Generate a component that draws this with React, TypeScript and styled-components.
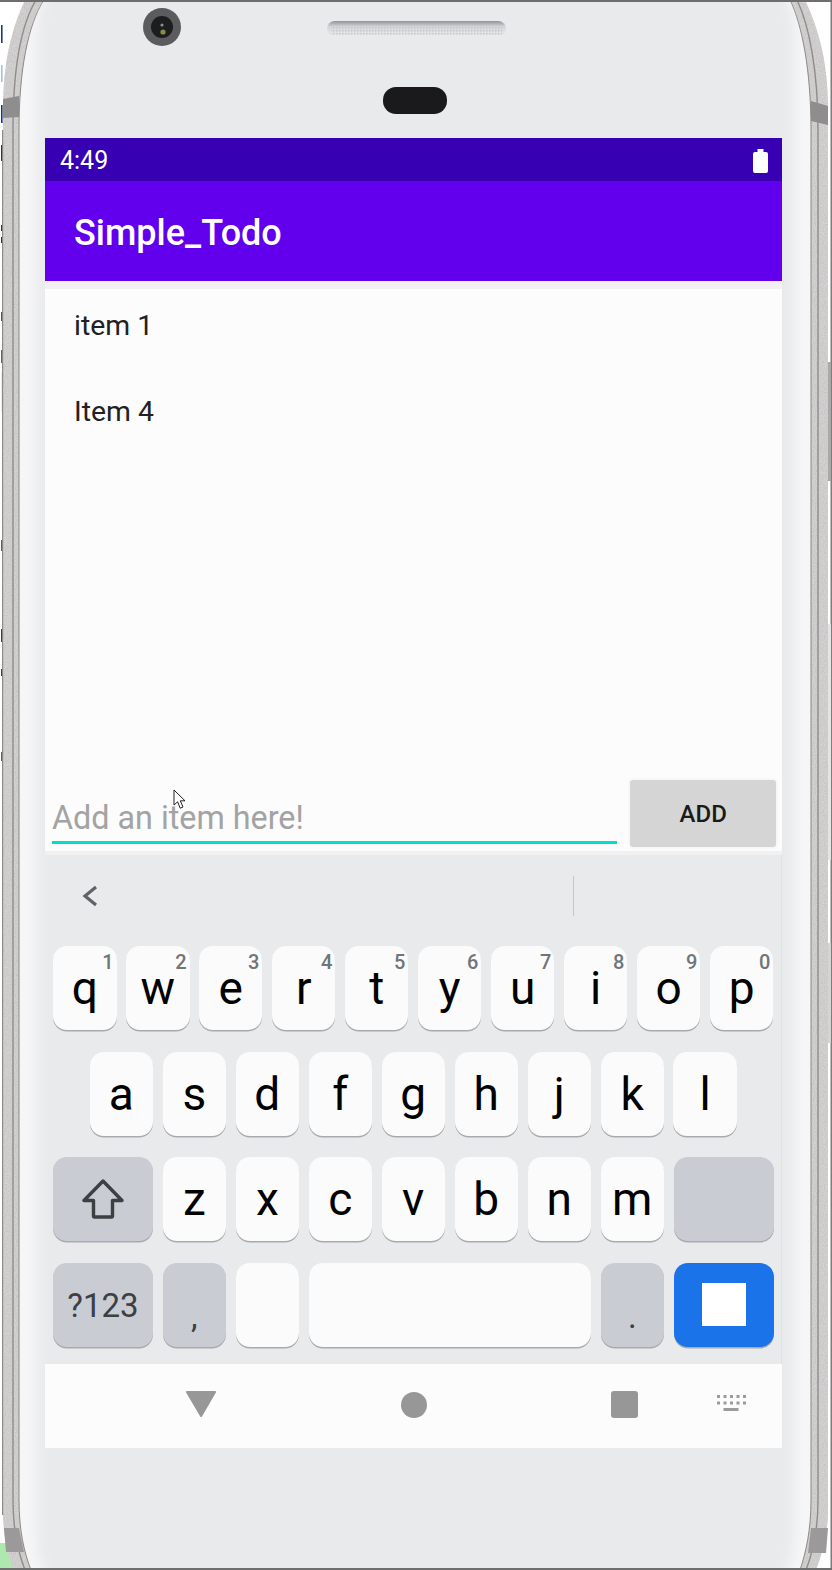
import { createGlobalStyle, styled } from 'styled-components';

const row1 = [
  ['q', '1'],
  ['w', '2'],
  ['e', '3'],
  ['r', '4'],
  ['t', '5'],
  ['y', '6'],
  ['u', '7'],
  ['i', '8'],
  ['o', '9'],
  ['p', '0'],
];
const row2 = ['a', 's', 'd', 'f', 'g', 'h', 'j', 'k', 'l'];
const row3 = ['z', 'x', 'c', 'v', 'b', 'n', 'm'];
const todos = ['item 1', 'Item 4'];

// stray pixels of the desktop behind the emulator window
const specks = [
  [25, 18, '#1b3a7a'],
  [65, 17, '#9fc0e8'],
  [105, 18, '#123a78'],
  [145, 16, '#123a78'],
  [225, 6, '#123a78'],
  [237, 6, '#123a78'],
  [312, 9, '#5a3fb0'],
  [350, 13, '#6a4cc0'],
  [372, 40, '#f5eecb'],
  [540, 11, '#1f6fc0'],
  [629, 13, '#6a1b8a'],
  [669, 7, '#6a1b8a'],
  [752, 9, '#1f6fc0'],
] as const;

const OUTER =
  'M25 0C12 28 3 60 3 110L3 1513C3 1530 6 1552 14 1570L816 1570C823 1552 828 1530 828 1513L828 110C828 60 818 28 805 0Z';
const BEZEL =
  'M44 0C28 25 19 70 19 130L19 1500C19 1530 24 1552 31 1570L800 1570C806 1552 811 1530 811 1500L811 130C811 70 802 25 790 0Z';

const PhoneShell = () => (
  <ShellArt viewBox="0 0 832 1570" width={832} height={1570}>
    <defs>
      <linearGradient id="speaker" x1="0" y1="0" x2="0" y2="1">
        <stop offset="0" stopColor="#8f9297" />
        <stop offset="0.35" stopColor="#d4d5d8" />
        <stop offset="1" stopColor="#ebecee" />
      </linearGradient>
      <pattern id="mesh" width="3" height="3" patternUnits="userSpaceOnUse">
        <rect width="1.5" height="1.5" fill="#c4c5c8" />
      </pattern>
      <filter id="soft" x="-10%" y="-10%" width="120%" height="120%">
        <feGaussianBlur stdDeviation="6" />
      </filter>
      <filter id="grain">
        <feTurbulence type="fractalNoise" baseFrequency="0.9" numOctaves="2" seed="4" />
        <feColorMatrix values="0 0 0 0 0.45 0 0 0 0 0.44 0 0 0 0 0.44 0 0 0 0.9 -0.2" />
      </filter>
      <clipPath id="bezelClip">
        <path d={BEZEL} />
      </clipPath>
      <clipPath id="metalClip">
        <path d={OUTER} />
      </clipPath>
    </defs>

    {specks.map(([y, h, color]) => (
      <rect key={y} x={1} y={y} width={1.6} height={h} fill={color} />
    ))}
    <path d="M0 1543L7 1543L15 1570L0 1570Z" fill="#aee8ae" />

    <path d={OUTER} fill="#d8d5d5" />
    <g clipPath="url(#metalClip)">
      <rect x={0} y={0} width={832} height={1570} filter="url(#grain)" />
    </g>
    <rect x={2} y={130} width={1.2} height={1385} fill="#8b8b8b" />
    <rect x={830.5} y={0} width={1.5} height={1570} fill="#7d7d7d" />
    <rect x={828} y={362} width={3} height={119} fill="#a9a9a9" />
    <rect x={828} y={624} width={3} height={236} fill="#e4e4e4" />
    <rect x={828} y={943} width={3} height={100} fill="#d4d4d4" />
    <path
      d="M36 0C21 25 13 70 13 130L13 1500C13 1530 18 1552 25 1570M806 1570C813 1552 818 1530 818 1500L818 130C818 70 809 25 797 0"
      fill="none"
      stroke="#8e8c8c"
      strokeWidth="1.4"
    />
    <path d="M3 99L19 96L19 117L3 118Z" fill="#8f8d8d" />
    <path d="M811 101L828 106L828 125L811 121Z" fill="#8f8d8d" />
    <path d="M4 1528L19 1528L24 1552L6 1552Z" fill="#9b9999" />
    <path d="M811 1528L828 1528L826 1553L808 1553Z" fill="#9b9999" />

    <path d={BEZEL} fill="#f6f6f7" stroke="#8a8888" strokeWidth="1" />
    <g clipPath="url(#bezelClip)">
      <rect x={37} y={-40} width={757} height={1650} rx={70} fill="#e9eaec" filter="url(#soft)" />
    </g>

    <rect x={0} y={0} width={832} height={2} fill="#6e6e6e" />
    <rect x={0} y={1568} width={832} height={2} fill="#6e6e6e" />

    <circle cx={162} cy={27} r={19} fill="#5c5c5e" />
    <circle cx={162} cy={27} r={11} fill="#1c1d1f" />
    <circle cx={162} cy={25} r={1.6} fill="#8a8d92" />
    <circle cx={163} cy={32} r={2.6} fill="#8c8a44" />

    <rect x={327} y={21} width={179} height={16} rx={8} fill="url(#speaker)" />
    <rect x={331} y={27} width={171} height={9} fill="url(#mesh)" />

    <rect x={383} y={87} width={64} height={27} rx={13} fill="#1a1a1c" />
  </ShellArt>
);

const App = () => {
  return (
    <>
      <GlobalStyle />
      <Phone>
        <PhoneShell />
        <Screen>
          <StatusBar>
            <span>4:49</span>
            <svg width="15" height="24" viewBox="0 0 15 24">
              <path d="M4.5 0h6v3H13a2 2 0 0 1 2 2v17a2 2 0 0 1-2 2H2a2 2 0 0 1-2-2V5a2 2 0 0 1 2-2h2.5z" fill="#fff" />
            </svg>
          </StatusBar>
          <AppBar>Simple_Todo</AppBar>
          <Content>
            <TodoList>
              {todos.map((todo) => (
                <TodoItem key={todo}>{todo}</TodoItem>
              ))}
            </TodoList>
            <InputRow>
              <ItemInput placeholder="Add an item here!" readOnly />
              <AddButton>ADD</AddButton>
            </InputRow>
            <Cursor width="14" height="21" viewBox="0 0 14 21">
              <path d="M1 1v15l3.6-3.2 2.6 6.4 2.8-1.2-2.7-6.2H12z" fill="#fff" stroke="#222" strokeWidth="1" />
            </Cursor>
          </Content>
          <Keyboard>
            <Toolbar>
              <svg width="16" height="22" viewBox="0 0 16 22">
                <path d="M14 2L3 11l11 9" fill="none" stroke="#5f6368" strokeWidth="3.2" />
              </svg>
              <ToolbarDivider />
            </Toolbar>
            <KeyRow>
              {row1.map(([letter, digit]) => (
                <Key key={letter}>
                  {letter}
                  <KeyDigit>{digit}</KeyDigit>
                </Key>
              ))}
            </KeyRow>
            <KeyRow>
              {row2.map((letter) => (
                <Key key={letter}>{letter}</Key>
              ))}
            </KeyRow>
            <KeyRow>
              <Key $width={100} $tone="gray">
                <svg width="42" height="40" viewBox="0 0 42 40">
                  <path
                    d="M21 2L2 21.5h9.5V37a1 1 0 0 0 1 1h17a1 1 0 0 0 1-1V21.5H40z"
                    fill="none"
                    stroke="#3c4043"
                    strokeWidth="3.4"
                    strokeLinejoin="round"
                  />
                </svg>
              </Key>
              {row3.map((letter) => (
                <Key key={letter}>{letter}</Key>
              ))}
              <Key $width={100} $tone="gray" />
            </KeyRow>
            <KeyRow>
              <SymbolKey $width={100} $tone="gray">
                ?123
              </SymbolKey>
              <PunctuationKey $tone="gray">,</PunctuationKey>
              <Key />
              <Key $width={282.4} />
              <PunctuationKey $tone="gray">.</PunctuationKey>
              <Key $width={100} $tone="blue">
                <EnterGlyph />
              </Key>
            </KeyRow>
          </Keyboard>
          <NavBar>
            <BackIcon width="32" height="28" viewBox="0 0 32 28">
              <path d="M2 1h28a1 1 0 0 1 .9 1.4L17 26.5a1 1 0 0 1-1.8 0L1.1 2.4A1 1 0 0 1 2 1z" fill="#979797" />
            </BackIcon>
            <HomeDot />
            <RecentSquare />
            <KeyboardIcon width="30" height="18" viewBox="0 0 30 18">
              <g fill="#9b9b9b">
                <rect x="0" y="0" width="3" height="3" />
                <rect x="6.5" y="0" width="3" height="3" />
                <rect x="13" y="0" width="3" height="3" />
                <rect x="19.5" y="0" width="3" height="3" />
                <rect x="26" y="0" width="3" height="3" />
                <rect x="0" y="6.5" width="3" height="3" />
                <rect x="6.5" y="6.5" width="3" height="3" />
                <rect x="13" y="6.5" width="3" height="3" />
                <rect x="19.5" y="6.5" width="3" height="3" />
                <rect x="26" y="6.5" width="3" height="3" />
                <rect x="6.5" y="13" width="15" height="3" />
              </g>
            </KeyboardIcon>
          </NavBar>
        </Screen>
      </Phone>
    </>
  );
};

export default App;

const GlobalStyle = createGlobalStyle`
  html, body {
    margin: 0;
    padding: 0;
    background: #fff;
    font-family: Roboto, "Liberation Sans", sans-serif;
  }
`;

const Phone = styled.div`
  position: relative;
  width: 832px;
  height: 1570px;
  box-sizing: border-box;
  padding: 138px 50px 122px 45px;
  overflow: hidden;
`;

const ShellArt = styled.svg`
  position: absolute;
  top: 0;
  left: 0;
`;

const Screen = styled.div`
  position: relative;
  height: 100%;
  display: flex;
  flex-direction: column;
`;

const StatusBar = styled.div`
  height: 43px;
  flex: none;
  box-sizing: border-box;
  display: flex;
  align-items: center;
  justify-content: space-between;
  padding: 2px 14px 0 15px;
  background: #3700b3;
  color: #fff;
  font-size: 25px;
`;

const AppBar = styled.div`
  height: 100px;
  flex: none;
  box-sizing: border-box;
  display: flex;
  align-items: center;
  padding: 4px 0 0 29px;
  background: #6200ee;
  color: #fff;
  font-size: 36px;
  font-weight: 500;
`;

const Content = styled.div`
  position: relative;
  flex: 1;
  display: flex;
  flex-direction: column;
  background: #fcfcfc;
  border-top: 8px solid #f2f0f5;
  border-bottom: 4px solid #f1f1f2;
`;

const TodoList = styled.div`
  flex: 1;
  margin-top: -7px;
`;

const TodoItem = styled.div`
  height: 86px;
  display: flex;
  align-items: center;
  padding-left: 29px;
  color: #212121;
  font-size: 28.4px;
`;

const InputRow = styled.div`
  display: flex;
  align-items: flex-end;
  justify-content: space-between;
  padding: 0 5.8px 4px 7px;
`;

const ItemInput = styled.input`
  width: 565px;
  height: 50px;
  box-sizing: border-box;
  margin-bottom: 3px;
  padding: 0;
  border: 0;
  border-bottom: 3px solid #00dfc8;
  outline: 0;
  background: transparent;
  font-family: inherit;
  font-size: 32.3px;

  &::placeholder {
    color: #a3a3a3;
    opacity: 1;
  }
`;

const AddButton = styled.button`
  width: 146px;
  height: 67px;
  border: 0;
  border-radius: 3px;
  background: #d6d5d6;
  box-shadow: 0 0 4px rgba(0, 0, 0, 0.06);
  color: #1a1a1a;
  font-family: inherit;
  font-size: 24px;
  font-weight: 500;
`;

const Cursor = styled.svg`
  position: absolute;
  left: 128px;
  top: 500px;
`;

const Keyboard = styled.div`
  height: 509px;
  flex: none;
  box-sizing: border-box;
  display: flex;
  flex-direction: column;
  gap: 21.6px;
  padding: 0 7.75px 0 8.25px;
  border-right: 1px solid #e0e1e3;
`;

const Toolbar = styled.div`
  height: 69.4px;
  box-sizing: border-box;
  display: flex;
  align-items: center;
  justify-content: space-between;
  padding: 12px 199px 0 29px;
`;

const ToolbarDivider = styled.div`
  width: 1px;
  height: 40px;
  background: #c4c6c9;
`;

const KeyRow = styled.div`
  display: flex;
  justify-content: center;
  gap: 9.6px;
`;

const keyColors = {
  white: '#fbfbfb',
  gray: '#c9ccd3',
  blue: '#1a73e8',
};

const Key = styled.div<{ $width?: number; $tone?: keyof typeof keyColors }>`
  position: relative;
  width: ${({ $width }) => $width ?? 63.4}px;
  height: 84px;
  flex: none;
  display: flex;
  align-items: center;
  justify-content: center;
  border-radius: 14px;
  background: ${({ $tone }) => keyColors[$tone ?? 'white']};
  box-shadow: 0 1.5px 0 #a9aaad;
  color: #000;
  font-size: 46px;
`;

const KeyDigit = styled.span`
  position: absolute;
  top: 4px;
  right: 3px;
  color: #70757a;
  font-size: 20px;
  font-weight: 500;
`;

const SymbolKey = styled(Key)`
  padding-top: 2px;
  box-sizing: border-box;
  color: #3c4043;
  font-size: 33px;
`;

const PunctuationKey = styled(Key)`
  align-items: flex-end;
  padding-bottom: 14px;
  box-sizing: border-box;
  color: #3c4043;
  font-size: 33px;
  line-height: 1;
`;

const EnterGlyph = styled.div`
  width: 44px;
  height: 43px;
  background: #fff;
`;

const NavBar = styled.div`
  height: 84px;
  flex: none;
  display: flex;
  align-items: center;
  background: #fcfcfc;
  padding-left: 140px;
`;

const BackIcon = styled.svg`
  margin: -4px 184px 0 0;
`;

const HomeDot = styled.div`
  width: 26px;
  height: 26px;
  margin: -3px 184px 0 0;
  border-radius: 50%;
  background: #979797;
`;

const RecentSquare = styled.div`
  width: 27px;
  height: 27px;
  margin-top: -3px;
  border-radius: 3px;
  background: #979797;
`;

const KeyboardIcon = styled.svg`
  margin: -4px 0 0 79px;
`;
